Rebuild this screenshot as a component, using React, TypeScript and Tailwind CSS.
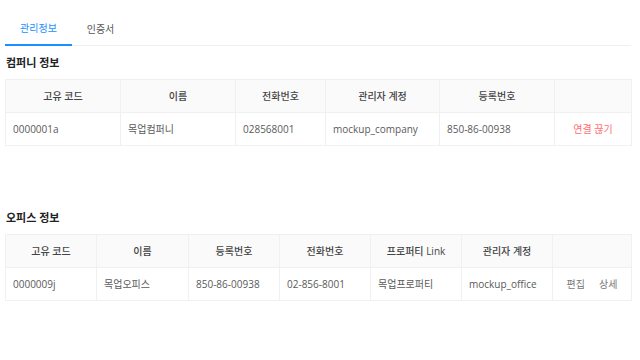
const font = { fontFamily: '"Open Sans", "Noto Sans CJK KR", sans-serif' };

interface Col {
  label: string;
  width: string;
}

const companyCols: Col[] = [
  { label: "고유 코드", width: "w-[115px]" },
  { label: "이름", width: "w-[115px]" },
  { label: "전화번호", width: "w-[90px]" },
  { label: "관리자 계정", width: "w-[114px]" },
  { label: "등록번호", width: "w-[115px]" },
  { label: "", width: "w-[77px]" },
];

const officeCols: Col[] = [
  { label: "고유 코드", width: "w-[91px]" },
  { label: "이름", width: "w-[92px]" },
  { label: "등록번호", width: "w-[91px]" },
  { label: "전화번호", width: "w-[91px]" },
  { label: "프로퍼티 Link", width: "w-[91px]" },
  { label: "관리자 계정", width: "w-[91px]" },
  { label: "", width: "w-[79px]" },
];

function Header({ cols }: { cols: Col[] }) {
  return (
    <thead>
      <tr className="h-[33px] bg-[#fafafa]">
        {cols.map((c, i) => (
          <th
            key={i}
            className={`${c.width} border border-[#f0f0f0] text-center text-[10px] font-medium text-[#444]`}
          >
            {c.label}
          </th>
        ))}
      </tr>
    </thead>
  );
}

function Cell({ children }: { children: React.ReactNode }) {
  return (
    <td className="border border-[#f0f0f0] px-[7px] text-left text-[10px] text-[#5a5a5a]">
      {children}
    </td>
  );
}

export default function App() {
  return (
    <div style={font} className="w-[640px] h-[360px] bg-white pl-[5px] pr-[9px] pt-[12px]">
      <div className="flex border-b border-[#f0f0f0] h-[34px]">
        <div className="w-[67px] flex items-center justify-center text-[10px] text-[#1890ff] border-b-2 border-[#1890ff] -mb-px">
          관리정보
        </div>
        <div className="w-[57px] flex items-center justify-center text-[10px] text-[#555] -mb-px">
          인증서
        </div>
      </div>

      <h2 className="mt-[10px] pl-px text-[11px] font-semibold text-[#222] leading-[14px]">컴퍼니 정보</h2>
      <table className="mt-[9px] w-[626px] table-fixed border-collapse">
        <Header cols={companyCols} />
        <tbody>
          <tr className="h-[33px]">
            <Cell>0000001a</Cell>
            <Cell>목업컴퍼니</Cell>
            <Cell>028568001</Cell>
            <Cell>mockup_company</Cell>
            <Cell>850-86-00938</Cell>
            <td className="border border-[#f0f0f0] text-center text-[10px] text-[#ff6b6e]">연결 끊기</td>
          </tr>
        </tbody>
      </table>

      <h2 className="mt-[65px] pl-px text-[11px] font-semibold text-[#222] leading-[14px]">오피스 정보</h2>
      <table className="mt-[9px] w-[626px] table-fixed border-collapse">
        <Header cols={officeCols} />
        <tbody>
          <tr className="h-[33px]">
            <Cell>0000009j</Cell>
            <Cell>목업오피스</Cell>
            <Cell>850-86-00938</Cell>
            <Cell>02-856-8001</Cell>
            <Cell>목업프로퍼티</Cell>
            <Cell>mockup_office</Cell>
            <td className="border border-[#f0f0f0] text-center text-[10px] text-[#777]">
              <span className="mr-[14px]">편집</span>
              <span>상세</span>
            </td>
          </tr>
        </tbody>
      </table>
    </div>
  );
}
